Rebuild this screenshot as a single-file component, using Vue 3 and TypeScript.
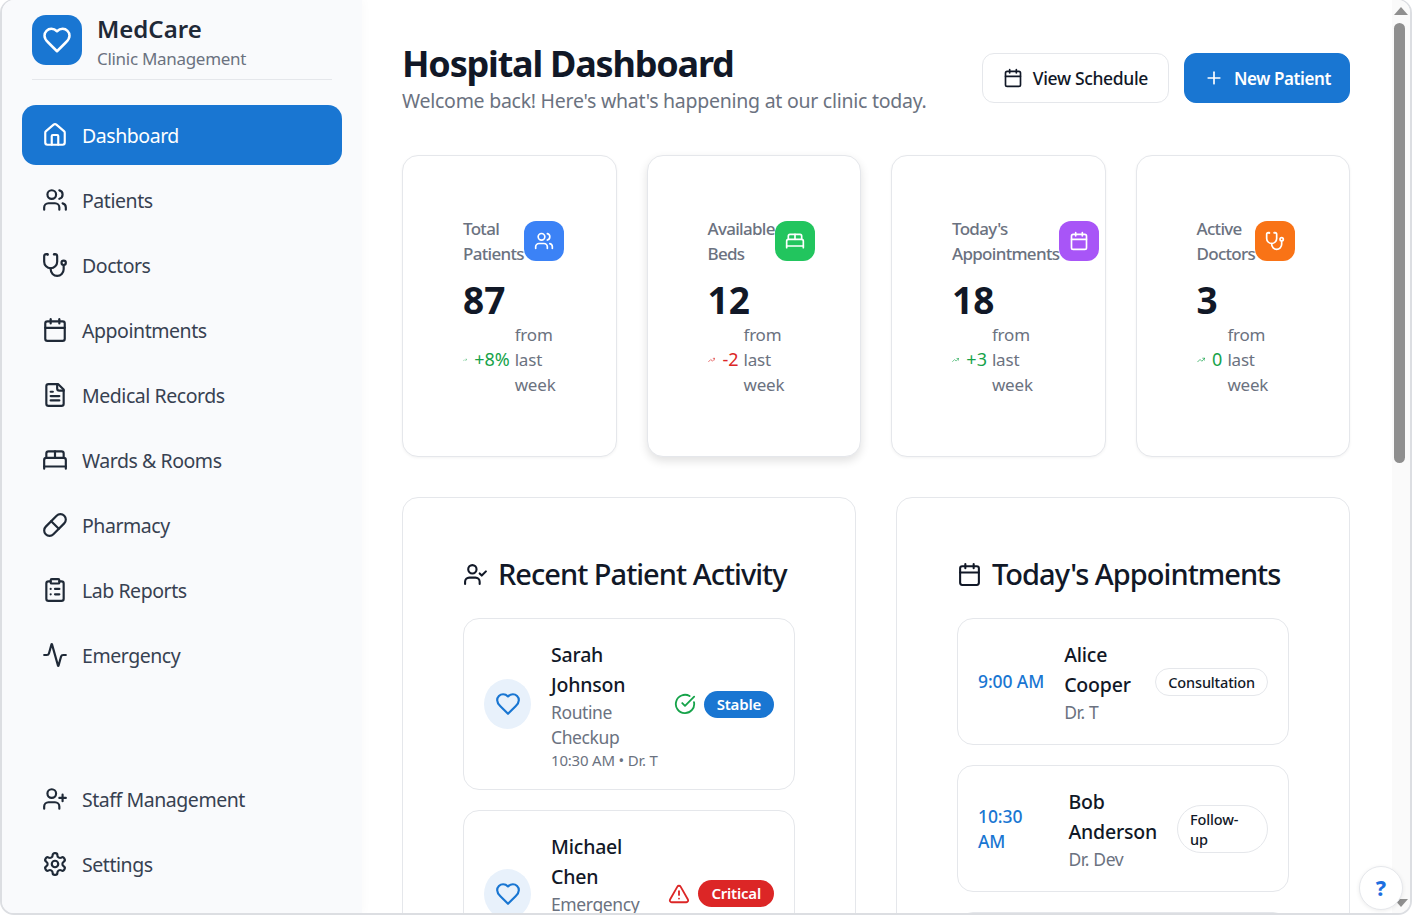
<script setup lang="ts">
type Shape = { d?: string[]; circles?: number[][]; rects?: number[][] };

const icons: Record<string, Shape> = {
  heart: { d: ["M19 14c1.49-1.46 3-3.21 3-5.5A5.5 5.5 0 0 0 16.5 3c-1.76 0-3 .5-4.5 2-1.5-1.5-2.74-2-4.5-2A5.5 5.5 0 0 0 2 8.5c0 2.3 1.5 4.05 3 5.5l7 7Z"] },
  home: { d: ["M15 21v-8a1 1 0 0 0-1-1h-4a1 1 0 0 0-1 1v8", "M3 10a2 2 0 0 1 .709-1.528l7-5.999a2 2 0 0 1 2.582 0l7 5.999A2 2 0 0 1 21 10v9a2 2 0 0 1-2 2H5a2 2 0 0 1-2-2z"] },
  users: { d: ["M16 21v-2a4 4 0 0 0-4-4H6a4 4 0 0 0-4 4v2", "M22 21v-2a4 4 0 0 0-3-3.87", "M16 3.13a4 4 0 0 1 0 7.75"], circles: [[9, 7, 4]] },
  stethoscope: { d: ["M4.8 2.3A.3.3 0 1 0 5 2H4a2 2 0 0 0-2 2v5a6 6 0 0 0 6 6 6 6 0 0 0 6-6V4a2 2 0 0 0-2-2h-1a.2.2 0 1 0 .3.3", "M8 15v1a6 6 0 0 0 6 6 6 6 0 0 0 6-6v-4"], circles: [[20, 10, 2]] },
  calendar: { d: ["M8 2v4", "M16 2v4", "M3 10h18"], rects: [[3, 4, 18, 18, 2]] },
  file: { d: ["M15 2H6a2 2 0 0 0-2 2v16a2 2 0 0 0 2 2h12a2 2 0 0 0 2-2V7Z", "M14 2v4a2 2 0 0 0 2 2h4", "M10 9H8", "M16 13H8", "M16 17H8"] },
  bed: { d: ["M2 20v-8a2 2 0 0 1 2-2h16a2 2 0 0 1 2 2v8", "M4 10V6a2 2 0 0 1 2-2h12a2 2 0 0 1 2 2v4", "M12 4v6", "M2 18h20"] },
  pill: { d: ["m10.5 20.5 10-10a4.95 4.95 0 1 0-7-7l-10 10a4.95 4.95 0 1 0 7 7Z", "m8.5 8.5 7 7"] },
  clipboard: { d: ["M16 4h2a2 2 0 0 1 2 2v14a2 2 0 0 1-2 2H6a2 2 0 0 1-2-2V6a2 2 0 0 1 2-2h2", "M12 11h4", "M12 16h4", "M8 11h.01", "M8 16h.01"], rects: [[8, 2, 8, 4, 1]] },
  activity: { d: ["M22 12h-2.48a2 2 0 0 0-1.93 1.46l-2.35 8.36a.25.25 0 0 1-.48 0L9.24 2.18a.25.25 0 0 0-.48 0l-2.35 8.36A2 2 0 0 1 4.49 12H2"] },
  userPlus: { d: ["M16 21v-2a4 4 0 0 0-4-4H6a4 4 0 0 0-4 4v2", "M19 8v6", "M22 11h-6"], circles: [[9, 7, 4]] },
  userCheck: { d: ["M16 21v-2a4 4 0 0 0-4-4H6a4 4 0 0 0-4 4v2", "m16 11 2 2 4-4"], circles: [[9, 7, 4]] },
  settings: { d: ["M12.22 2h-.44a2 2 0 0 0-2 2v.18a2 2 0 0 1-1 1.73l-.43.25a2 2 0 0 1-2 0l-.15-.08a2 2 0 0 0-2.73.73l-.22.38a2 2 0 0 0 .73 2.73l.15.1a2 2 0 0 1 1 1.72v.51a2 2 0 0 1-1 1.74l-.15.09a2 2 0 0 0-.73 2.73l.22.38a2 2 0 0 0 2.73.73l.15-.08a2 2 0 0 1 2 0l.43.25a2 2 0 0 1 1 1.73V20a2 2 0 0 0 2 2h.44a2 2 0 0 0 2-2v-.18a2 2 0 0 1 1-1.73l.43-.25a2 2 0 0 1 2 0l.15.08a2 2 0 0 0 2.73-.73l.22-.39a2 2 0 0 0-.73-2.73l-.15-.08a2 2 0 0 1-1-1.74v-.5a2 2 0 0 1 1-1.74l.15-.09a2 2 0 0 0 .73-2.73l-.22-.38a2 2 0 0 0-2.73-.73l-.15.08a2 2 0 0 1-2 0l-.43-.25a2 2 0 0 1-1-1.73V4a2 2 0 0 0-2-2z"], circles: [[12, 12, 3]] },
  check: { d: ["M21.801 10A10 10 0 1 1 17 3.335", "m9 11 3 3L22 4"] },
  alert: { d: ["m21.73 18-8-14a2 2 0 0 0-3.48 0l-8 14A2 2 0 0 0 4 21h16a2 2 0 0 0 1.73-3", "M12 9v4", "M12 17h.01"] },
  trend: { d: ["M22 7 13.5 15.5 8.5 10.5 2 17", "M16 7h6v6"] },
  plus: { d: ["M5 12h14", "M12 5v14"] },
};

const nav = [
  { label: "Dashboard", icon: "home", active: true },
  { label: "Patients", icon: "users" },
  { label: "Doctors", icon: "stethoscope" },
  { label: "Appointments", icon: "calendar" },
  { label: "Medical Records", icon: "file" },
  { label: "Wards & Rooms", icon: "bed" },
  { label: "Pharmacy", icon: "pill" },
  { label: "Lab Reports", icon: "clipboard" },
  { label: "Emergency", icon: "activity" },
];
const navBottom = [
  { label: "Staff Management", icon: "userPlus" },
  { label: "Settings", icon: "settings" },
];

const stats = [
  { label: "Total Patients", value: "87", trend: "+8%", tone: "up", icon: "users", bg: "#3b82f6" },
  { label: "Available Beds", value: "12", trend: "-2", tone: "down", icon: "bed", bg: "#22c55e", raised: true },
  { label: "Today's Appointments", value: "18", trend: "+3", tone: "up", icon: "calendar", bg: "#a855f7" },
  { label: "Active Doctors", value: "3", trend: "0", tone: "up", icon: "stethoscope", bg: "#f97316" },
];

const activity = [
  { name: "Sarah Johnson", reason: "Routine Checkup", meta: "10:30 AM • Dr. T", status: "Stable", icon: "check", tone: "stable" },
  { name: "Michael Chen", reason: "Emergency", meta: "11:15 AM • Dr. Dev", status: "Critical", icon: "alert", tone: "critical" },
  { name: "Emma Wilson", reason: "Follow-up", meta: "1:00 PM • Dr. T", status: "Stable", icon: "check", tone: "stable" },
];

const appointments = [
  { time: "9:00 AM", name: "Alice Cooper", doctor: "Dr. T", kind: "Consultation" },
  { time: "10:30 AM", name: "Bob Anderson", doctor: "Dr. Dev", kind: "Follow-up" },
  { time: "2:00 PM", name: "Carol Davis", doctor: "Dr. T", kind: "Checkup" },
];
</script>

<template>
  <div class="frame">
    <aside class="sidebar">
      <div class="brand">
        <div class="logo">
          <svg class="ic" viewBox="0 0 24 24" width="30" height="30"><path v-for="d in icons.heart.d" :key="d" :d="d" /></svg>
        </div>
        <div class="brand-text">
          <div class="brand-name">MedCare</div>
          <div class="brand-sub">Clinic Management</div>
        </div>
      </div>
      <nav class="nav">
        <a v-for="n in nav" :key="n.label" class="nav-item" :class="{ active: n.active }">
          <svg class="ic" viewBox="0 0 24 24" width="26" height="26">
            <path v-for="d in icons[n.icon].d" :key="d" :d="d" />
            <circle v-for="c in icons[n.icon].circles" :key="c[0]" :cx="c[0]" :cy="c[1]" :r="c[2]" />
            <rect v-for="r in icons[n.icon].rects" :key="r[0]" :x="r[0]" :y="r[1]" :width="r[2]" :height="r[3]" :rx="r[4]" />
          </svg>
          <span>{{ n.label }}</span>
        </a>
      </nav>
      <nav class="nav nav-bottom">
        <a v-for="n in navBottom" :key="n.label" class="nav-item">
          <svg class="ic" viewBox="0 0 24 24" width="26" height="26">
            <path v-for="d in icons[n.icon].d" :key="d" :d="d" />
            <circle v-for="c in icons[n.icon].circles" :key="c[0]" :cx="c[0]" :cy="c[1]" :r="c[2]" />
          </svg>
          <span>{{ n.label }}</span>
        </a>
      </nav>
    </aside>

    <main class="main">
      <header class="top">
        <div>
          <h1>Hospital Dashboard</h1>
          <p>Welcome back! Here's what's happening at our clinic today.</p>
        </div>
        <div class="actions">
          <button class="btn ghost">
            <svg class="ic" viewBox="0 0 24 24" width="20" height="20">
              <path v-for="d in icons.calendar.d" :key="d" :d="d" />
              <rect x="3" y="4" width="18" height="18" rx="2" />
            </svg>
            View Schedule
          </button>
          <button class="btn primary">
            <svg class="ic" viewBox="0 0 24 24" width="20" height="20"><path v-for="d in icons.plus.d" :key="d" :d="d" /></svg>
            New Patient
          </button>
        </div>
      </header>

      <section class="stats">
        <div v-for="s in stats" :key="s.label" class="stat" :class="{ raised: s.raised }">
          <div class="stat-head">
            <div class="stat-label">{{ s.label }}</div>
            <div class="stat-icon" :style="{ background: s.bg }">
              <svg class="ic" viewBox="0 0 24 24" width="20" height="20">
                <path v-for="d in icons[s.icon].d" :key="d" :d="d" />
                <circle v-for="c in icons[s.icon].circles" :key="c[0]" :cx="c[0]" :cy="c[1]" :r="c[2]" />
                <rect v-for="r in icons[s.icon].rects" :key="r[0]" :x="r[0]" :y="r[1]" :width="r[2]" :height="r[3]" :rx="r[4]" />
              </svg>
            </div>
          </div>
          <div class="stat-value">{{ s.value }}</div>
          <div class="stat-trend">
            <svg class="ic trend" :class="s.tone" viewBox="0 0 24 24" width="16" height="16"><path v-for="d in icons.trend.d" :key="d" :d="d" /></svg>
            <span class="trend-num" :class="s.tone">{{ s.trend }}</span>
            <span>from last week</span>
          </div>
        </div>
      </section>

      <section class="columns">
        <div class="panel">
          <h2>
            <svg class="ic" viewBox="0 0 24 24" width="25" height="25">
              <path v-for="d in icons.userCheck.d" :key="d" :d="d" />
              <circle cx="9" cy="7" r="4" />
            </svg>
            Recent Patient Activity
          </h2>
          <div class="list">
            <div v-for="p in activity" :key="p.name" class="row">
              <div class="avatar">
                <svg class="ic" viewBox="0 0 24 24" width="26" height="26"><path v-for="d in icons.heart.d" :key="d" :d="d" /></svg>
              </div>
              <div class="row-body">
                <div class="row-name">{{ p.name }}</div>
                <div class="row-sub">{{ p.reason }}</div>
                <div class="row-meta">{{ p.meta }}</div>
              </div>
              <div class="row-status">
                <svg class="ic" :class="p.tone" viewBox="0 0 24 24" width="22" height="22"><path v-for="d in icons[p.icon].d" :key="d" :d="d" /></svg>
                <span class="badge" :class="p.tone">{{ p.status }}</span>
              </div>
            </div>
          </div>
        </div>

        <div class="panel">
          <h2>
            <svg class="ic" viewBox="0 0 24 24" width="25" height="25">
              <path v-for="d in icons.calendar.d" :key="d" :d="d" />
              <rect x="3" y="4" width="18" height="18" rx="2" />
            </svg>
            Today's Appointments
          </h2>
          <div class="list">
            <div v-for="a in appointments" :key="a.name" class="row appt">
              <div class="appt-time">{{ a.time }}</div>
              <div class="row-body">
                <div class="row-name">{{ a.name }}</div>
                <div class="row-sub">{{ a.doctor }}</div>
              </div>
              <span class="chip">{{ a.kind }}</span>
            </div>
          </div>
        </div>
      </section>
    </main>

    <div class="rail">
      <div class="arrow up-arrow"></div>
      <div class="thumb"></div>
      <div class="arrow down-arrow"></div>
    </div>

    <button class="help">?</button>
  </div>
</template>

<style>
html,
body {
  margin: 0;
  background: #fff;
  overflow: hidden;
}
</style>

<style scoped>
.frame {
  position: relative;
  box-sizing: border-box;
  width: 1412px;
  height: 916px;
  margin-top: -1px;
  display: flex;
  overflow: hidden;
  background: #fff;
  border: 2px solid #dcdee2;
  border-top-width: 1px;
  border-radius: 14px;
  font-family: "Noto Sans", sans-serif;
  color: #111827;
}
.ic {
  flex-shrink: 0;
  fill: none;
  stroke: currentColor;
  stroke-width: 2;
  stroke-linecap: round;
  stroke-linejoin: round;
}
.sidebar {
  position: relative;
  z-index: 1;
  width: 360px;
  flex-shrink: 0;
  display: flex;
  flex-direction: column;
  background: #f9fafc;
  box-shadow: 3px 0 8px rgba(0, 0, 0, 0.02);
  box-sizing: border-box;
  padding: 15px 20px 19px;
}
.brand {
  display: flex;
  align-items: flex-start;
  gap: 15px;
  margin: 0 10px 25px;
  padding-bottom: 5px;
  border-bottom: 1px solid #e5e7eb;
}
.logo {
  width: 50px;
  height: 50px;
  flex-shrink: 0;
  border-radius: 14px;
  background: #1976d2;
  color: #fff;
  display: flex;
  align-items: center;
  justify-content: center;
}
.brand-text {
  margin-top: -1px;
}
.brand-name {
  font-size: 24px;
  font-weight: 600;
  line-height: 30px;
  color: #1f2937;
}
.brand-sub {
  font-size: 17px;
  line-height: 30px;
  color: #6b7280;
  letter-spacing: -0.3px;
}
.nav {
  display: flex;
  flex-direction: column;
  gap: 5px;
}
.nav-bottom {
  margin-top: auto;
}
.nav-item {
  height: 60px;
  display: flex;
  align-items: center;
  gap: 14px;
  padding: 0 20px;
  border-radius: 14px;
  font-size: 19.5px;
  color: #374151;
  letter-spacing: -0.45px;
}
.nav-item .ic {
  color: #1f2937;
}
.nav-item.active {
  background: #1976d2;
  color: #fff;
}
.nav-item.active .ic {
  color: #fff;
}
.main {
  flex: 1;
  min-width: 0;
  overflow: hidden;
  padding: 41px 42px 0 40px;
  box-sizing: border-box;
}
.rail {
  width: 18px;
  flex-shrink: 0;
  display: flex;
  flex-direction: column;
  align-items: center;
  background: #fafafa;
  padding: 7px 0 6px;
  box-sizing: border-box;
}
.arrow {
  width: 0;
  height: 0;
  border-left: 7px solid transparent;
  border-right: 7px solid transparent;
}
.up-arrow {
  border-bottom: 8px solid #8f8f8f;
}
.down-arrow {
  margin-top: auto;
  border-top: 8px solid #8f8f8f;
}
.thumb {
  width: 11px;
  height: 440px;
  margin: 8px 3px 0 0;
  border-radius: 6px;
  background: #8f8f8f;
}
.top {
  display: flex;
  justify-content: space-between;
  align-items: flex-start;
  margin-bottom: 41px;
}
h1 {
  margin: -1px 0 0;
  font-size: 36px;
  line-height: 48px;
  font-weight: 700;
  letter-spacing: -1.2px;
}
.top p {
  margin: 0;
  font-size: 19.5px;
  line-height: 26px;
  color: #6b7280;
  letter-spacing: -0.26px;
}
.actions {
  display: flex;
  gap: 15px;
  padding-top: 12px;
}
.btn {
  height: 50px;
  display: flex;
  align-items: center;
  gap: 10px;
  padding: 0 20px;
  border-radius: 12px;
  font: 500 17.5px "Noto Sans", sans-serif;
  letter-spacing: -0.35px;
  border: 1px solid #e5e7eb;
  background: #fff;
  color: #111827;
}
.btn.primary {
  background: #1976d2;
  border-color: #1976d2;
  color: #fff;
  font-size: 17px;
  font-weight: 600;
  letter-spacing: -0.4px;
  padding: 0 18px 0 19px;
}
.stats {
  display: grid;
  grid-template-columns: repeat(4, 1fr);
  gap: 30px;
  margin-bottom: 40px;
}
.stat {
  min-width: 0;
  box-sizing: border-box;
  height: 302px;
  padding: 60px;
  background: #fff;
  border: 1px solid #e5e7eb;
  border-radius: 16px;
  box-shadow: 0 1px 3px rgba(0, 0, 0, 0.05);
}
.stat.raised {
  box-shadow: 0 4px 10px rgba(0, 0, 0, 0.12);
}
.stat-head {
  display: flex;
  justify-content: space-between;
  align-items: center;
  margin-bottom: 11px;
}
.stat-label {
  font-size: 17px;
  line-height: 25px;
  font-weight: 500;
  color: #6b7280;
  letter-spacing: -0.7px;
}
.stat-icon {
  width: 40px;
  height: 40px;
  flex-shrink: 0;
  border-radius: 12px;
  color: #fff;
  display: flex;
  align-items: center;
  justify-content: center;
}
.stat-value {
  font-size: 37px;
  line-height: 45px;
  font-weight: 700;
  color: #111827;
}
.stat-trend {
  display: flex;
  align-items: center;
  gap: 5px;
  font-size: 17px;
  line-height: 25px;
  color: #6b7280;
  letter-spacing: -0.2px;
}
.trend-num {
  margin-left: 2px;
  font-size: 18px;
  letter-spacing: 0;
}
.up {
  color: #16a34a;
}
.down {
  color: #dc2626;
}
.trend {
  flex-shrink: 1;
  min-width: 0;
}
.columns {
  display: grid;
  grid-template-columns: 1fr 1fr;
  gap: 40px;
}
.panel {
  min-width: 0;
  padding: 60px;
  background: #fff;
  border: 1px solid #e5e7eb;
  border-radius: 16px;
}
h2 {
  margin: -1px 0 27px;
  display: flex;
  align-items: center;
  gap: 10px;
  font-size: 29px;
  line-height: 34px;
  font-weight: 500;
  letter-spacing: -0.98px;
  height: 34px;
}
.list {
  display: flex;
  flex-direction: column;
  gap: 20px;
}
.row {
  display: flex;
  align-items: center;
  gap: 20px;
  padding: 20px;
  border: 1px solid #e5e7eb;
  border-radius: 16px;
}
.avatar {
  width: 47px;
  height: 50px;
  flex-shrink: 0;
  border-radius: 50%;
  background: #e8f1fb;
  color: #1976d2;
  display: flex;
  align-items: center;
  justify-content: center;
}
.row-body {
  min-width: 0;
  flex: 1;
  padding-top: 1px;
  margin-bottom: -1px;
}
.appt .row-body {
  min-width: auto;
}
.row-name {
  font-size: 19.5px;
  line-height: 30px;
  font-weight: 500;
  color: #111827;
  letter-spacing: -0.2px;
}
.row-sub {
  font-size: 17.5px;
  line-height: 25px;
  color: #6b7280;
  letter-spacing: -0.4px;
}
.row-meta {
  font-size: 15px;
  line-height: 20px;
  color: #6b7280;
  letter-spacing: -0.2px;
}
.row-status {
  flex-shrink: 0;
  margin-left: -8px;
  display: flex;
  align-items: center;
  gap: 8px;
}
.stable {
  color: #16a34a;
}
.critical {
  color: #dc2626;
}
.badge {
  padding: 0 13px;
  line-height: 27px;
  border-radius: 14px;
  font-size: 15px;
  font-weight: 600;
  color: #fff;
  letter-spacing: -0.2px;
}
.badge.stable {
  background: #1976d2;
}
.badge.critical {
  background: #dc2626;
}
.appt-time {
  font-size: 17.5px;
  line-height: 25px;
  font-weight: 500;
  color: #1976d2;
  letter-spacing: -0.1px;
}
.chip {
  flex-shrink: 0.2;
  padding: 3px 12px;
  line-height: 20px;
  border: 1px solid #e5e7eb;
  border-radius: 24px;
  font-size: 14.5px;
  font-weight: 500;
  color: #111827;
  letter-spacing: -0.15px;
}
.help {
  position: absolute;
  right: 7px;
  bottom: 3px;
  z-index: 2;
  width: 44px;
  height: 44px;
  border-radius: 50%;
  border: 1px solid #e5e7eb;
  background: #fff;
  color: #1d6fe0;
  font: 800 21px "Noto Sans", sans-serif;
  box-shadow: 0 1px 4px rgba(0, 0, 0, 0.08);
  padding: 0;
}
</style>
